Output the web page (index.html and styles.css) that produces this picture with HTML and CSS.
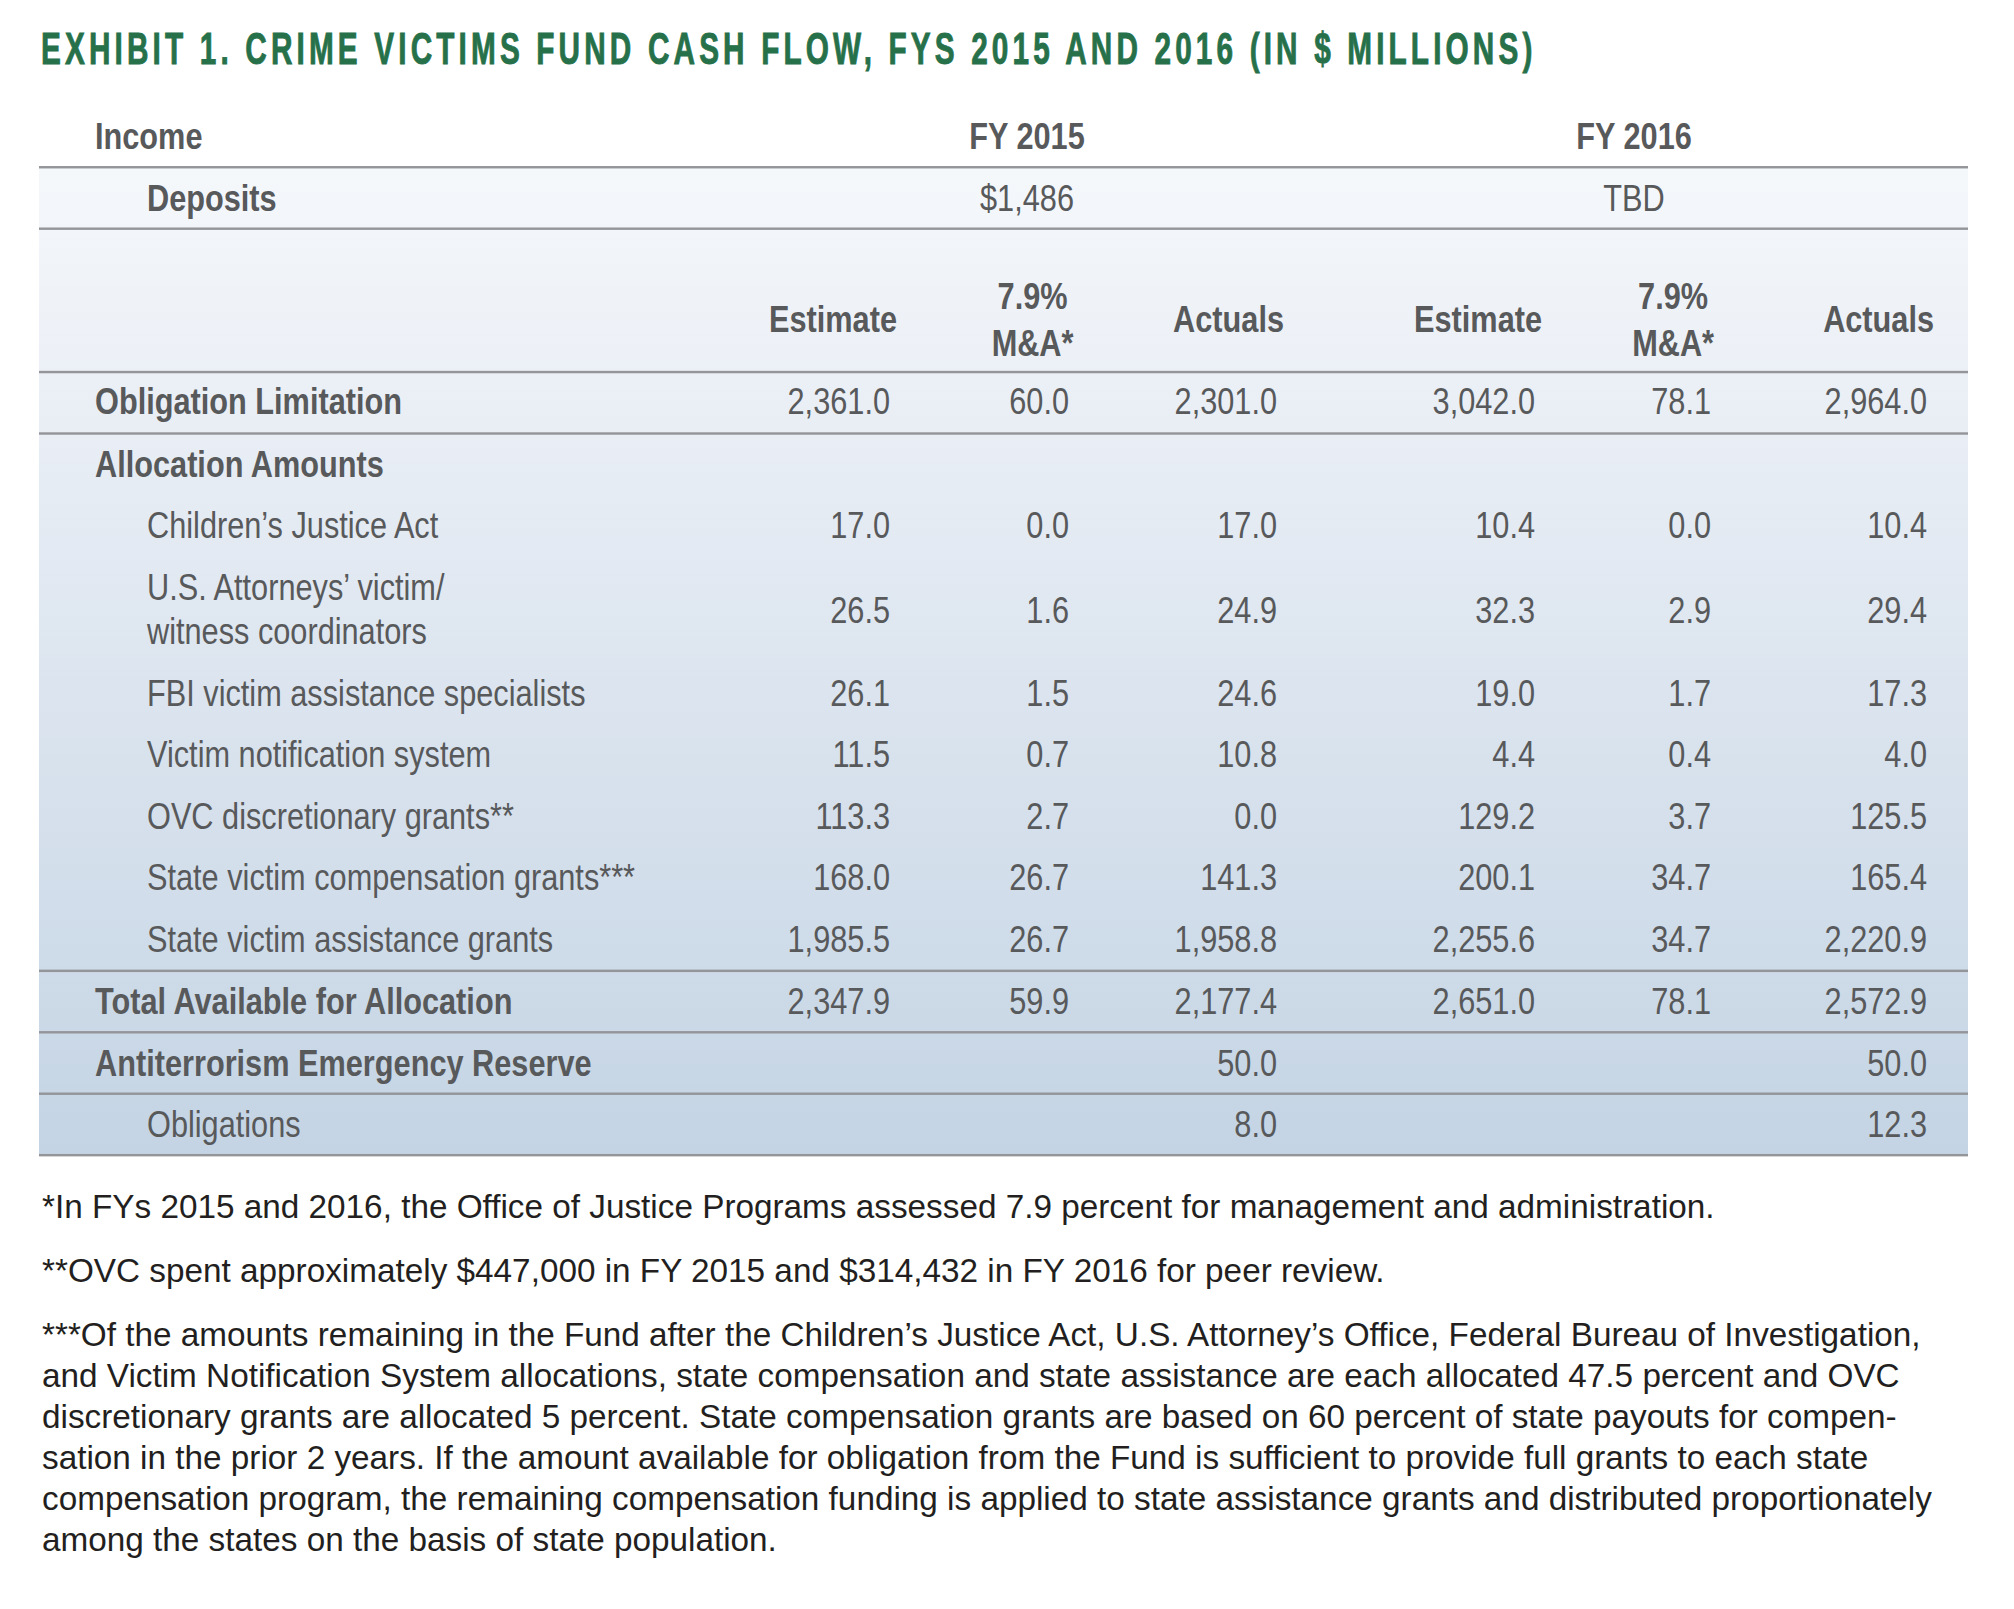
FILE: index.html
```html
<!DOCTYPE html>
<html lang="en">
<head>
<meta charset="utf-8">
<title>Exhibit 1. Crime Victims Fund Cash Flow</title>
<link rel="stylesheet" href="styles.css">
</head>
<body>
<div class="page">
  <div class="title-wrap">
    <h1 class="title">EXHIBIT 1. CRIME VICTIMS FUND CASH FLOW, FYS 2015 AND 2016 (IN $ MILLIONS)</h1>
  </div>

  <div class="table-wrap">
  <table class="cvf">
    <colgroup>
      <col class="c-label">
      <col class="c-est">
      <col class="c-ma">
      <col class="c-act">
      <col class="c-est2">
      <col class="c-ma2">
      <col class="c-act2">
    </colgroup>
    <thead>
      <tr class="top">
        <th class="label b">Income</th>
        <th class="grp g1 b" colspan="3">FY 2015</th>
        <th class="grp g2 b" colspan="3">FY 2016</th>
      </tr>
    </thead>
    <tbody>
      <tr class="ruled">
        <td class="label sub b">Deposits</td>
        <td class="grp g1" colspan="3">$1,486</td>
        <td class="grp g2" colspan="3">TBD</td>
      </tr>
      <tr class="ruled heads">
        <td class="label"></td>
        <td class="num b">Estimate</td>
        <td class="num ma-col b"><span class="ma">7.9%<br>M&amp;A*</span></td>
        <td class="num b">Actuals</td>
        <td class="num b">Estimate</td>
        <td class="num ma-col2 b"><span class="ma">7.9%<br>M&amp;A*</span></td>
        <td class="num b">Actuals</td>
      </tr>
      <tr class="ruled">
        <td class="label b">Obligation Limitation</td>
        <td class="num">2,361.0</td><td class="num ma-col">60.0</td><td class="num">2,301.0</td>
        <td class="num">3,042.0</td><td class="num ma-col2">78.1</td><td class="num">2,964.0</td>
      </tr>
      <tr class="alloc">
        <td class="label b">Allocation Amounts</td>
        <td></td><td></td><td></td><td></td><td></td><td></td>
      </tr>
      <tr class="alloc">
        <td class="label sub">Children’s Justice Act</td>
        <td class="num">17.0</td><td class="num ma-col">0.0</td><td class="num">17.0</td>
        <td class="num">10.4</td><td class="num ma-col2">0.0</td><td class="num">10.4</td>
      </tr>
      <tr class="alloc two">
        <td class="label sub">U.S. Attorneys’ victim/<br>witness coordinators</td>
        <td class="num">26.5</td><td class="num ma-col">1.6</td><td class="num">24.9</td>
        <td class="num">32.3</td><td class="num ma-col2">2.9</td><td class="num">29.4</td>
      </tr>
      <tr class="alloc">
        <td class="label sub">FBI victim assistance specialists</td>
        <td class="num">26.1</td><td class="num ma-col">1.5</td><td class="num">24.6</td>
        <td class="num">19.0</td><td class="num ma-col2">1.7</td><td class="num">17.3</td>
      </tr>
      <tr class="alloc">
        <td class="label sub">Victim notification system</td>
        <td class="num">11.5</td><td class="num ma-col">0.7</td><td class="num">10.8</td>
        <td class="num">4.4</td><td class="num ma-col2">0.4</td><td class="num">4.0</td>
      </tr>
      <tr class="alloc">
        <td class="label sub">OVC discretionary grants**</td>
        <td class="num">113.3</td><td class="num ma-col">2.7</td><td class="num">0.0</td>
        <td class="num">129.2</td><td class="num ma-col2">3.7</td><td class="num">125.5</td>
      </tr>
      <tr class="alloc">
        <td class="label sub">State victim compensation grants***</td>
        <td class="num">168.0</td><td class="num ma-col">26.7</td><td class="num">141.3</td>
        <td class="num">200.1</td><td class="num ma-col2">34.7</td><td class="num">165.4</td>
      </tr>
      <tr class="alloc ruled">
        <td class="label sub">State victim assistance grants</td>
        <td class="num">1,985.5</td><td class="num ma-col">26.7</td><td class="num">1,958.8</td>
        <td class="num">2,255.6</td><td class="num ma-col2">34.7</td><td class="num">2,220.9</td>
      </tr>
      <tr class="ruled">
        <td class="label b">Total Available for Allocation</td>
        <td class="num">2,347.9</td><td class="num ma-col">59.9</td><td class="num">2,177.4</td>
        <td class="num">2,651.0</td><td class="num ma-col2">78.1</td><td class="num">2,572.9</td>
      </tr>
      <tr class="ruled">
        <td class="label b">Antiterrorism Emergency Reserve</td>
        <td></td><td></td><td class="num">50.0</td>
        <td></td><td></td><td class="num">50.0</td>
      </tr>
      <tr class="ruled">
        <td class="label sub">Obligations</td>
        <td></td><td></td><td class="num">8.0</td>
        <td></td><td></td><td class="num">12.3</td>
      </tr>
    </tbody>
  </table>
  </div>

  <div class="notes">
    <p>*In FYs 2015 and 2016, the Office of Justice Programs assessed 7.9 percent for management and administration.</p>
    <p>**OVC spent approximately $447,000 in FY 2015 and $314,432 in FY 2016 for peer review.</p>
    <p>***Of the amounts remaining in the Fund after the Children’s Justice Act, U.S. Attorney’s Office, Federal Bureau of Investigation,<br>and Victim Notification System allocations, state compensation and state assistance are each allocated 47.5 percent and OVC<br>discretionary grants are allocated 5 percent. State compensation grants are based on 60 percent of state payouts for compen-<br>sation in the prior 2 years. If the amount available for obligation from the Fund is sufficient to provide full grants to each state<br>compensation program, the remaining compensation funding is applied to state assistance grants and distributed proportionately<br>among the states on the basis of state population.</p>
  </div>
</div>
</body>
</html>
```

FILE: styles.css
```css
html, body {
  margin: 0;
  padding: 0;
  background: #ffffff;
}

.page {
  width: 2014px;
  padding: 0 0 0 39px;
  box-sizing: border-box;
}

/* Title: condensed display face emulated by vertical stretching */
.title-wrap {
  height: 50px;
  margin-top: 24px;
}

.title {
  margin: 0 0 0 2px;
  font-family: "Liberation Sans", Arial, sans-serif;
  font-weight: 700;
  font-size: 29.74px;
  line-height: 33.8px;
  letter-spacing: 4.15px;
  color: #26704a;
  -webkit-text-stroke: 0.6px #26704a;
  white-space: nowrap;
  transform: scaleY(1.4795);
  transform-origin: 0 0;
}

/* Table: laid out at 83% height, then stretched vertically (condensed face) */
.table-wrap {
  margin-top: 33px;
  width: 1929px;
  height: 1051px;
}

.cvf {
  width: 1929px;
  border-collapse: collapse;
  table-layout: fixed;
  font-family: "Liberation Sans", Arial, sans-serif;
  font-size: 30.71px;
  line-height: 36.52px;
  color: #58595b;
  background: linear-gradient(to bottom, #ffffff 0, #ffffff 49.8px, #f5f8fb 49.8px, #e9eef5 265.6px, #c4d4e4 100%);
  transform: scaleY(1.2048);
  transform-origin: 0 0;
}

.c-label { width: 681px; }
.c-est { width: 211px; }
.c-ma { width: 179px; }
.c-act { width: 208px; }
.c-est2 { width: 258px; }
.c-ma2 { width: 184px; }
.c-act2 { width: 208px; }

.cvf th, .cvf td {
  padding: 6.64px 0 6.225px 0;
  font-weight: 400;
  white-space: nowrap;
}

.cvf .b { font-weight: 700; }

.top th {
  border-bottom: 2px solid #939598;
  padding-bottom: 5.885px;
}

.ruled td {
  border-bottom: 2px solid #939598;
  padding-bottom: 5.885px;
}

.label {
  text-align: left;
  padding-left: 56px !important;
}

.label.sub {
  padding-left: 108px !important;
}

.grp { text-align: center; }
.g1 { padding-left: 16px !important; }
.g2 { padding-right: 18px !important; }

.num {
  text-align: right;
  padding-right: 41px !important;
}

.num.ma-col2 { padding-right: 49px !important; }

.cvf .heads td {
  padding-top: 37.35px;
  padding-bottom: 2.98px;
  line-height: 38.18px;
  vertical-align: middle;
}

.heads .num { padding-right: 34px !important; }
.heads .num.ma-col { padding-right: 36.5px !important; }
.heads .num.ma-col2 { padding-right: 46px !important; }

.ma {
  display: inline-block;
  text-align: center;
}

.alloc td {
  padding-top: 7.47px;
  padding-bottom: 7.055px;
}

.cvf .alloc.ruled td {
  padding-bottom: 6.715px;
}

.notes {
  margin-top: 28px;
  font-family: "Liberation Sans", Arial, sans-serif;
  font-size: 33.3px;
  line-height: 41px;
  color: #231f20;
}

.notes p {
  margin: 0 0 23px 3px;
  white-space: nowrap;
}
```
